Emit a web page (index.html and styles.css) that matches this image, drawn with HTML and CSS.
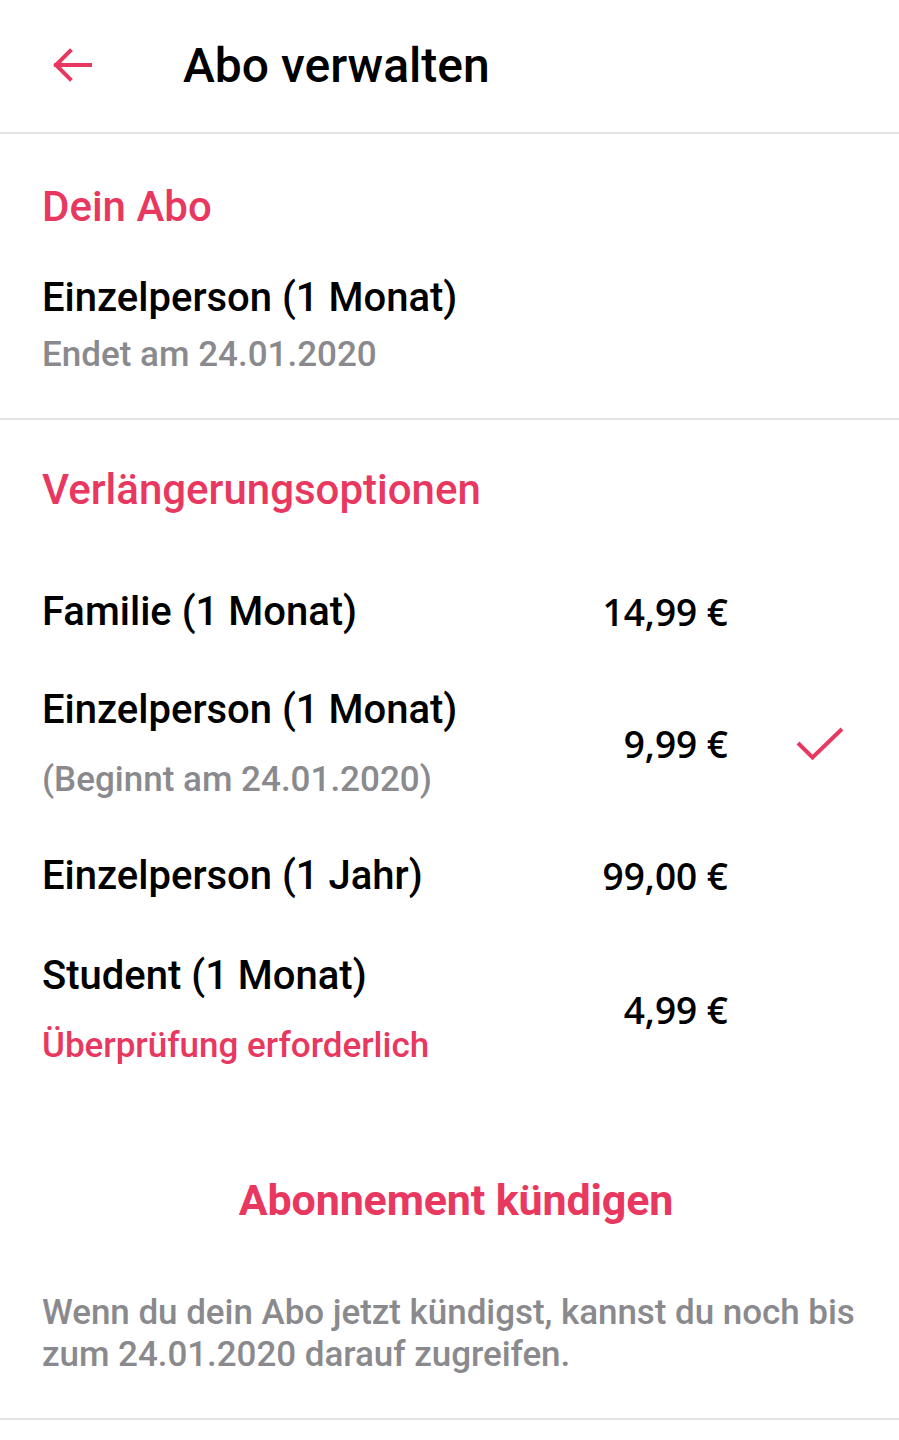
FILE: index.html
```html
<!DOCTYPE html>
<html lang="de">
<head>
<meta charset="utf-8">
<link rel="stylesheet" href="styles.css">
</head>
<body>
<header class="topbar">
  <svg class="back" width="44" height="44" viewBox="0 0 44 44" aria-hidden="true">
    <path d="M41 21H7M21 7L7 21l14 14" fill="none" stroke="#e8385f" stroke-width="4" stroke-linecap="square"/>
  </svg>
  <h1 class="title">Abo verwalten</h1>
</header>

<section class="current">
  <h2 class="section-title">Dein Abo</h2>
  <div class="plan-name">Einzelperson (1 Monat)</div>
  <div class="sub sub-tight">Endet am 24.01.2020</div>
</section>

<section class="options">
  <h2 class="section-title">Verlängerungsoptionen</h2>
  <div class="option">
    <div class="opt-text"><div class="plan-name">Familie (1 Monat)</div></div>
    <div class="price">14,99 €</div>
    <div class="mark"></div>
  </div>
  <div class="option">
    <div class="opt-text">
      <div class="plan-name">Einzelperson (1 Monat)</div>
      <div class="sub sub-gap">(Beginnt am 24.01.2020)</div>
    </div>
    <div class="price">9,99 €</div>
    <div class="mark">
      <svg width="48" height="34" viewBox="0 0 48 34" aria-hidden="true">
        <path d="M2 16l14.5 14.5L46 2" fill="none" stroke="#e8385f" stroke-width="4"/>
      </svg>
    </div>
  </div>
  <div class="option">
    <div class="opt-text"><div class="plan-name">Einzelperson (1 Jahr)</div></div>
    <div class="price">99,00 €</div>
    <div class="mark"></div>
  </div>
  <div class="option option-last">
    <div class="opt-text">
      <div class="plan-name">Student (1 Monat)</div>
      <div class="sub sub-red sub-gap">Überprüfung erforderlich</div>
    </div>
    <div class="price">4,99 €</div>
    <div class="mark"></div>
  </div>

  <div class="cancel">Abonnement kündigen</div>
</section>
<p class="note">Wenn du dein Abo jetzt kündigst, kannst du noch bis zum 24.01.2020 darauf zugreifen.</p>
</body>
</html>
```

FILE: styles.css
```css
html, body {
  margin: 0;
  padding: 0;
  background: #ffffff;
}
body {
  font-family: Roboto, "Noto Sans", sans-serif;
  color: #000;
}
.topbar {
  display: flex;
  align-items: center;
  border-bottom: 2px solid #e3e3e3;
  box-sizing: border-box;
  height: 134px;
}
.back {
  margin-left: 49px;
  flex: none;
}
.title {
  margin: 0 0 0 90px;
  font-weight: 500;
  font-size: 48px;
  line-height: 56px;
}
.current {
  padding: 48px 42px 41px;
  border-bottom: 2px solid #e3e3e3;
}
.section-title {
  margin: 0;
  font-weight: 500;
  font-size: 42px;
  color: #e8385f;
  line-height: 50px;
}
.current .section-title {
  margin-bottom: 42px;
}
.plan-name {
  font-size: 40px;
  font-weight: 500;
  line-height: 48px;
}
.sub {
  font-size: 35px;
  font-weight: 500;
  line-height: 44px;
  color: #8a8a8e;
}
.sub-tight {
  margin-top: 11px;
}
.sub-gap {
  margin-top: 24px;
}
.sub-red {
  color: #e8385f;
}
.options {
  padding: 45px 0 0 42px;
}
.options .section-title {
  margin-bottom: 48px;
}
.option {
  display: grid;
  grid-template-columns: 1fr 200px 171px;
  align-items: center;
  padding: 25px 0;
}
.option-last {
  padding-top: 27px;
}
.price {
  text-align: right;
  font-family: "Open Sans", "Noto Sans", sans-serif;
  font-size: 37px;
  font-weight: 600;
  line-height: 48px;
}
.mark {
  display: flex;
  justify-content: flex-start;
  padding-left: 68px;
}
.cancel {
  margin-top: 82px;
  padding-right: 29px;
  text-align: center;
  font-weight: 700;
  font-size: 43px;
  line-height: 50px;
  color: #e8385f;
  letter-spacing: -0.15px;
}
.note {
  margin: 67px 0 0;
  padding: 0 24px 42px 42px;
  border-bottom: 2px solid #e3e3e3;
  font-size: 35px;
  font-weight: 500;
  line-height: 42px;
  letter-spacing: -0.05px;
  color: #8a8a8e;
}
```
